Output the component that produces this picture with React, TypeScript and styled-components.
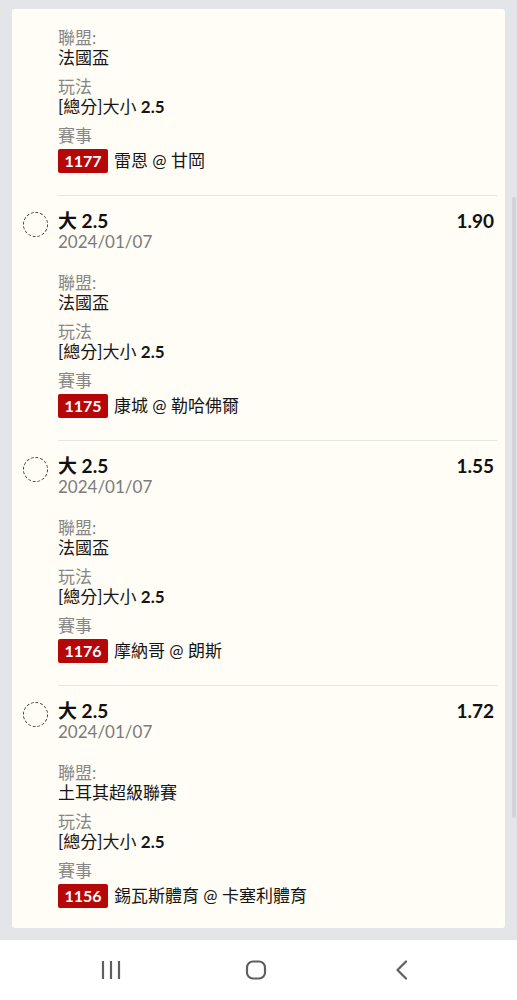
import React from "react";
import styled, { createGlobalStyle } from "styled-components";

const GlobalStyle = createGlobalStyle`
  html, body {
    margin: 0;
    padding: 0;
    background: #e4e5e9;
  }
  body {
    font-family: Lato, "Noto Sans CJK TC", sans-serif;
    color: #161616;
  }
`;

interface Bet {
  pick?: string;
  odds?: string;
  date?: string;
  league: string;
  market: string;
  line: string;
  matchNo: string;
  match: string;
}

const bets: Bet[] = [
  { league: "法國盃", market: "[總分]大小", line: "2.5", matchNo: "1177", match: "雷恩 @ 甘岡" },
  { pick: "大 2.5", odds: "1.90", date: "2024/01/07", league: "法國盃", market: "[總分]大小", line: "2.5", matchNo: "1175", match: "康城 @ 勒哈佛爾" },
  { pick: "大 2.5", odds: "1.55", date: "2024/01/07", league: "法國盃", market: "[總分]大小", line: "2.5", matchNo: "1176", match: "摩納哥 @ 朗斯" },
  { pick: "大 2.5", odds: "1.72", date: "2024/01/07", league: "土耳其超級聯賽", market: "[總分]大小", line: "2.5", matchNo: "1156", match: "錫瓦斯體育 @ 卡塞利體育" },
];

const Screen = styled.div`
  height: 1000px;
  display: flex;
  flex-direction: column;
  background: #e4e5e9;
`;

const Main = styled.div`
  position: relative;
  flex: 1;
  display: flex;
  flex-direction: column;
  padding: 9px 12px 12px 12px;
  min-height: 0;
`;

const Card = styled.div`
  flex: 1;
  background: #fffdf5;
  border-radius: 3px;
  overflow: hidden;
  padding: 0 8px 0 11px;
  display: flex;
  flex-direction: column;
`;

const ScrollThumb = styled.div`
  position: absolute;
  right: 1px;
  top: 197px;
  width: 4px;
  height: 621px;
  border-radius: 2px;
  background: #d2d3d7;
`;

const Item = styled.div`
  display: flex;
  flex-shrink: 0;
`;

const MarkerCol = styled.div`
  width: 24px;
  margin-right: 11px;
  flex-shrink: 0;
  padding-top: 17px;
`;

const Radio = styled.div`
  width: 23px;
  height: 23px;
  border-radius: 50%;
  border: 1px dashed #3a3a3a;
`;

const Body = styled.div<{ $first?: boolean }>`
  flex: 1;
  border-top: ${(p) => (p.$first ? "none" : "1px solid #e6e5df")};
  padding: ${(p) => (p.$first ? "19px" : "14px")} 0 22px 0;
`;

const HeadRow = styled.div`
  display: flex;
  justify-content: space-between;
  align-items: center;
  padding-right: 3px;
`;

const Pick = styled.div`
  font-size: 19px;
  line-height: 22px;
  font-weight: 700;
  color: #111;
`;

const Odds = styled.div`
  font-size: 19px;
  line-height: 22px;
  font-weight: 700;
  color: #111;
`;

const DateText = styled.div`
  font-size: 17px;
  line-height: 20px;
  color: #7b7b7b;
  margin-bottom: 21px;
`;

const Fields = styled.div`
  display: flex;
  flex-direction: column;
  gap: 10px;
`;

const Field = styled.div`
  display: flex;
  flex-direction: column;
`;

const Label = styled.div`
  font-size: 17px;
  line-height: 20px;
  color: #878787;
`;

const Value = styled.div`
  font-size: 17px;
  line-height: 19px;
  color: #161616;
  b {
    font-weight: 700;
  }
`;

const MatchRow = styled.div`
  display: flex;
  align-items: center;
  gap: 6px;
  height: 24px;
  margin-top: 3px;
  font-size: 17px;
  line-height: 20px;
  color: #161616;
`;

const Badge = styled.span`
  display: inline-flex;
  align-items: center;
  justify-content: center;
  width: 50px;
  height: 24px;
  border-radius: 2px;
  background: #b50707;
  color: #fff;
  font-weight: 700;
  font-size: 16px;
`;

const NavBar = styled.div`
  height: 60px;
  flex-shrink: 0;
  background: #fff;
  display: grid;
  grid-template-columns: repeat(3, 1fr);
  align-items: center;
  justify-items: center;
  padding: 0 42px 0 38px;
  box-sizing: border-box;
`;

const NavIcon = styled.svg`
  display: block;
  color: #5f5f5f;
`;

function BetItem({ bet, first }: { bet: Bet; first?: boolean }) {
  return (
    <Item>
      <MarkerCol>{!first && <Radio />}</MarkerCol>
      <Body $first={first}>
        {!first && (
          <>
            <HeadRow>
              <Pick>{bet.pick}</Pick>
              <Odds>{bet.odds}</Odds>
            </HeadRow>
            <DateText>{bet.date}</DateText>
          </>
        )}
        <Fields>
          <Field>
            <Label>聯盟:</Label>
            <Value>{bet.league}</Value>
          </Field>
          <Field>
            <Label>玩法</Label>
            <Value>
              {bet.market} <b>{bet.line}</b>
            </Value>
          </Field>
          <Field>
            <Label>賽事</Label>
            <MatchRow>
              <Badge>{bet.matchNo}</Badge>
              <span>{bet.match}</span>
            </MatchRow>
          </Field>
        </Fields>
      </Body>
    </Item>
  );
}

export default function App() {
  return (
    <>
      <GlobalStyle />
      <Screen>
        <Main>
          <Card>
            {bets.map((b, i) => (
              <BetItem key={i} bet={b} first={i === 0} />
            ))}
          </Card>
          <ScrollThumb />
        </Main>
        <NavBar>
          <NavIcon width="22" height="20" viewBox="0 0 22 20">
            <path d="M3 1v18M11 1v18M19 1v18" stroke="currentColor" strokeWidth="2.2" fill="none" />
          </NavIcon>
          <NavIcon width="22" height="20" viewBox="0 0 22 20">
            <rect x="2" y="1.5" width="18" height="17" rx="6" stroke="currentColor" strokeWidth="2.2" fill="none" />
          </NavIcon>
          <NavIcon width="14" height="20" viewBox="0 0 14 20">
            <path d="M11 1.5L2.5 10l8.5 8.5" stroke="currentColor" strokeWidth="2.2" fill="none" strokeLinecap="round" strokeLinejoin="round" />
          </NavIcon>
        </NavBar>
      </Screen>
    </>
  );
}
